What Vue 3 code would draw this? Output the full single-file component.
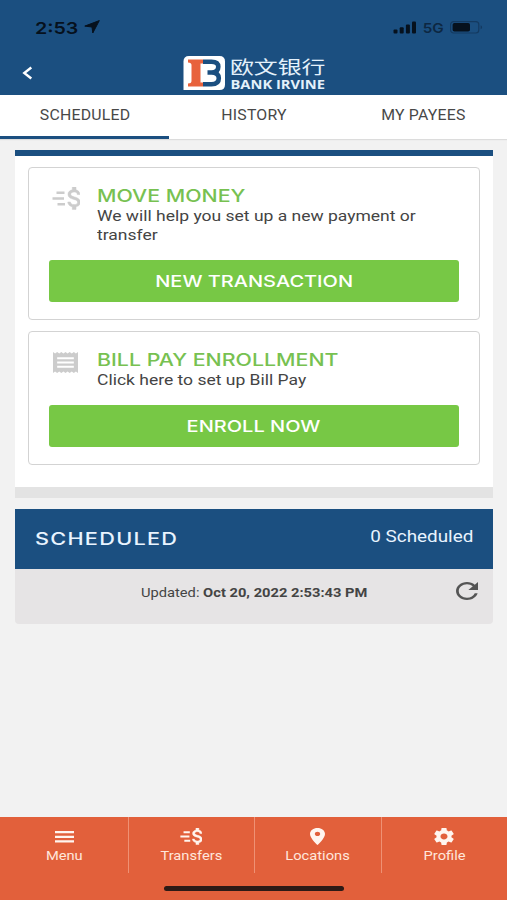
<template>
  <div class="screen">
    <header class="app-header">
      <div class="status-bar">
        <div class="status-left">
          <span class="clock">2:53</span>
          <svg class="nav-arrow" viewBox="0 0 16 14" preserveAspectRatio="none">
            <path d="M15.3 0.6 8.8 13 8 7 0.8 6.1z" />
          </svg>
        </div>
        <div class="status-right">
          <svg class="signal" viewBox="0 0 24 13">
            <rect x="0.5" y="8.5" width="4" height="4" rx="1" />
            <rect x="6.7" y="6.2" width="4" height="6.3" rx="1" />
            <rect x="12.9" y="3.5" width="4" height="9" rx="1" />
            <rect x="19" y="0.5" width="4" height="12" rx="1" />
          </svg>
          <span class="network">5G</span>
          <svg class="battery" viewBox="0 0 33 13">
            <rect class="battery-case" x="0.6" y="0.6" width="28.2" height="11.4" rx="3" />
            <rect x="2.6" y="2" width="17.4" height="8.6" rx="1.8" />
            <path class="battery-tip" d="M30.6 4.3c2 .8 2 3.2 0 4z" />
          </svg>
        </div>
      </div>

      <div class="brand-bar">
        <button class="back" aria-label="Back">
          <svg viewBox="0 0 11 14"><path d="M9.3 1.5 2.3 7l7 5.5" /></svg>
        </button>
        <svg class="logo" viewBox="0 0 144 36">
          <path class="logo-plate" d="M0.5 35V6.5Q0.5 1 6 1H36.5Q42 1 42 6.5V29.5Q42 35 36.5 35Z" />
          <!-- emblem: orange pillar and two blue arcs -->
          <path class="orange" d="M5 4.5H20V8.5H17.5V27.5H20V31.5H5V28.5Q8.5 28.5 8.5 26V10Q8.500 7.5 5 7.500Z" />
          <path class="arcs" d="M20 6.8H28.5Q35.3 6.8 35.3 11.8Q35.3 17.5 28.5 17.5H24.5M28.5 17.5Q35.8 17.5 35.8 23.3Q35.8 29.2 28.5 29.2H20" />
          <text class="brand-cn" x="47" y="18.8" textLength="95.5" lengthAdjust="spacingAndGlyphs">欧文银行</text>
          <text class="brand-en" x="47.5" y="34.2" textLength="94.5" lengthAdjust="spacingAndGlyphs">BANK IRVINE</text>
        </svg>
      </div>
    </header>

    <nav class="tabs">
      <button
        v-for="tab in tabs"
        :key="tab"
        :class="['tab', { active: tab === activeTab }]"
        @click="activeTab = tab"
      >
        <span>{{ tab }}</span>
      </button>
    </nav>

    <main class="content">
      <section class="actions">
        <article v-for="item in actions" :key="item.title" class="action">
          <div class="action-head">
            <div class="action-icon">
              <svg v-if="item.icon === 'money'" class="icon-money" viewBox="0 0 28 23" preserveAspectRatio="none">
                <path :d="moneyPath" transform="translate(7.9 -3.6) scale(1.24)" />
                <path class="dash" d="M4.5 5.8h8M0.5 11.5h11.5M5.5 17.2h7.5" />
              </svg>
              <svg v-else class="icon-receipt" viewBox="3 2 18 20" preserveAspectRatio="none">
                <path :d="receiptPath" />
              </svg>
            </div>
            <div class="action-text">
              <h2><span>{{ item.title }}</span></h2>
              <p><span v-for="line in item.lines" :key="line">{{ line }}</span></p>
            </div>
          </div>
          <button class="action-button"><span>{{ item.button }}</span></button>
        </article>
      </section>

      <section class="scheduled">
        <div class="scheduled-head">
          <h3>SCHEDULED</h3>
          <span class="count">0 Scheduled</span>
        </div>
        <div class="scheduled-info">
          <span class="updated">Updated: <b>Oct 20, 2022 2:53:43 PM</b></span>
          <button class="refresh" aria-label="Refresh">
            <svg viewBox="4 4 16 16" preserveAspectRatio="none"><path :d="refreshPath" /></svg>
          </button>
        </div>
      </section>
    </main>

    <footer class="bottom-bar">
      <div class="bottom-nav">
        <a v-for="link in links" :key="link.label" class="bottom-link">
          <svg :class="link.icon" :viewBox="link.viewBox" preserveAspectRatio="none">
            <template v-if="link.icon === 'transfers'">
              <path :d="moneyPath" transform="translate(7.9 -3.6) scale(1.24)" />
              <path class="dash" d="M4.5 5.8h8M0.5 11.5h11.5M5.5 17.2h7.5" />
            </template>
            <path v-else :d="link.path" />
          </svg>
          <span>{{ link.label }}</span>
        </a>
      </div>
      <div class="home-indicator"></div>
    </footer>
  </div>
</template>

<script setup>
import { ref } from "vue";

const tabs = ["SCHEDULED", "HISTORY", "MY PAYEES"];
const activeTab = ref("SCHEDULED");

const actions = [
  {
    icon: "money",
    title: "MOVE MONEY",
    lines: ["We will help you set up a new payment or", "transfer"],
    button: "NEW TRANSACTION",
  },
  {
    icon: "receipt",
    title: "BILL PAY ENROLLMENT",
    lines: ["Click here to set up Bill Pay"],
    button: "ENROLL NOW",
  },
];

const moneyPath =
  "M11.8 10.9c-2.27-.59-3-1.2-3-2.15 0-1.09 1.01-1.85 2.7-1.85 1.78 0 2.44.85 2.5 2.1h2.21c-.07-1.72-1.12-3.3-3.21-3.81V3h-3v2.16c-1.94.42-3.5 1.68-3.5 3.61 0 2.31 1.91 3.46 4.7 4.13 2.5.6 3 1.48 3 2.41 0 .69-.49 1.79-2.7 1.79-2.06 0-2.87-.92-2.98-2.1h-2.2c.12 2.19 1.76 3.42 3.68 3.83V21h3v-2.15c1.95-.37 3.5-1.5 3.5-3.55 0-2.84-2.43-3.81-4.7-4.4z";
const receiptPath =
  "M18 17H6v-2h12v2zm0-4H6v-2h12v2zm0-4H6V7h12v2zM3 22l1.5-1.5L6 22l1.5-1.5L9 22l1.5-1.5L12 22l1.5-1.5L15 22l1.5-1.5L18 22l1.5-1.5L21 22V2l-1.5 1.5L18 2l-1.5 1.5L15 2l-1.5 1.5L12 2l-1.5 1.5L9 2 7.5 3.5 6 2 4.5 3.5 3 2v20z";
const refreshPath =
  "M17.65 6.35C16.2 4.9 14.21 4 12 4c-4.42 0-7.99 3.58-7.99 8s3.57 8 7.99 8c3.73 0 6.84-2.55 7.73-6h-2.08c-.82 2.33-3.04 4-5.65 4-3.31 0-6-2.69-6-6s2.69-6 6-6c1.66 0 3.14.69 4.22 1.78L13 11h7V4l-2.35 2.35z";

const links = [
  { label: "Menu", icon: "menu", viewBox: "0 0 19 12", path: "M0 0h19v2.2H0zM0 4.7h19v2.2H0zM0 9.3h19v2.2H0z" },
  { label: "Transfers", icon: "transfers", viewBox: "0 0 28 23" },
  {
    label: "Locations",
    icon: "pin",
    viewBox: "5 2 14 20",
    path: "M12 2C8.13 2 5 5.13 5 9c0 5.25 7 13 7 13s7-7.75 7-13c0-3.87-3.13-7-7-7zm0 9.5c-1.38 0-2.5-1.12-2.5-2.5s1.12-2.5 2.5-2.5 2.5 1.12 2.5 2.5-1.12 2.5-2.5 2.5z",
  },
  {
    label: "Profile",
    icon: "gear",
    viewBox: "2 2 20 20",
    path: "M19.43 12.98c.04-.32.07-.64.07-.98s-.03-.66-.07-.98l2.11-1.65c.19-.15.24-.42.12-.64l-2-3.46c-.12-.22-.39-.3-.61-.22l-2.49 1c-.52-.4-1.08-.73-1.69-.98l-.38-2.65C14.46 2.18 14.25 2 14 2h-4c-.25 0-.46.18-.49.42l-.38 2.65c-.61.25-1.17.59-1.69.98l-2.49-1c-.23-.09-.49 0-.61.22l-2 3.46c-.13.22-.07.49.12.64l2.11 1.65c-.04.32-.07.65-.07.98s.03.66.07.98l-2.11 1.65c-.19.15-.24.42-.12.64l2 3.46c.12.22.39.3.61.22l2.49-1c.52.4 1.08.73 1.69.98l.38 2.65c.03.24.24.42.49.42h4c.25 0 .46-.18.49-.42l.38-2.65c.61-.25 1.17-.59 1.69-.98l2.49 1c.23.09.49 0 .61-.22l2-3.46c.12-.22.07-.49-.12-.64l-2.11-1.65zM12 15.5c-1.93 0-3.5-1.57-3.5-3.5s1.57-3.5 3.5-3.5 3.5 1.57 3.5 3.5-1.57 3.5-3.5 3.5z",
  },
];
</script>

<style>
body {
  background: #f2f2f2;
}
</style>

<style scoped>
.screen {
  display: flex;
  flex-direction: column;
  width: 507px;
  height: 900px;
  background: #f2f2f2;
  font-family: Roboto, "Liberation Sans", sans-serif;
  color: #444;
  overflow: hidden;
}

button {
  border: none;
  padding: 0;
  background: none;
  font-family: inherit;
  color: inherit;
  cursor: pointer;
}

h2,
h3,
p {
  margin: 0;
}

svg {
  display: block;
}

/* header */
.app-header {
  flex: none;
  height: 95px;
  background: #1b4f80;
}

.status-bar {
  display: flex;
  justify-content: space-between;
  align-items: center;
  height: 54px;
  padding: 0 24px 0 35px;
  box-sizing: border-box;
  color: #06111d;
  fill: #06111d;
}

.status-left,
.status-right {
  display: flex;
  align-items: center;
}

.clock {
  width: 49px;
  padding-top: 1px;
  font: 600 16.5px/20px Inter, sans-serif;
  transform: scaleX(1.19);
  transform-origin: left;
}

.nav-arrow {
  width: 16px;
  height: 14px;
  stroke: #06111d;
  stroke-width: 1;
  stroke-linejoin: round;
}

.signal {
  width: 24px;
  height: 13px;
}

.network {
  width: 28px;
  padding: 1px 0 0 5px;
  font: 600 13.5px/16px Inter, sans-serif;
  color: #0d2742;
  transform: scaleX(1.13);
  transform-origin: left;
}

.battery {
  width: 33px;
  height: 13px;
}

.battery-case {
  fill: none;
  stroke: #143a60;
  stroke-width: 1.2;
}

.battery-tip {
  fill: #143a60;
}

.brand-bar {
  display: flex;
  align-items: center;
  height: 36px;
  margin-top: 1px;
  padding-left: 22px;
}

.back svg {
  width: 11px;
  height: 14px;
  fill: none;
  stroke: #fff;
  stroke-width: 2.4;
}

.logo {
  width: 144px;
  height: 36px;
  margin-left: 150px;
  overflow: visible;
}

.logo-plate {
  fill: #fff;
}

.orange {
  fill: #e8623c;
}

.arcs {
  fill: none;
  stroke: #1b4f80;
  stroke-width: 4.6;
}

.brand-cn {
  font: 400 18px "Noto Sans CJK SC", sans-serif;
  fill: #e4f1fb;
}

.brand-en {
  font: bold 12px "Open Sans", sans-serif;
  fill: #e4f1fb;
}

/* tabs */
.tabs {
  flex: none;
  display: flex;
  height: 44px;
  background: #fff;
  box-shadow: 0 1px 1px #dcdcdc;
}

.tab {
  flex: 1;
  height: 44px;
  padding: 0 0 1px 1px;
  border-bottom: 3px solid transparent;
  font-size: 14px;
  color: #484848;
}

.tab.active {
  border-bottom-color: #1b4f80;
}

.tab span {
  display: inline-block;
  letter-spacing: 0.2px;
  transform: scaleX(1.13);
}

/* action cards */
.content {
  flex: 1;
  padding: 11px 14px 0 14.5px;
}

.actions {
  padding: 11px 13px 22px;
  background: #fff;
  border-top: 6px solid #1b4f80;
  border-bottom: 11px solid #e3e3e3;
}

.action {
  box-sizing: border-box;
  padding: 18px 20.5px 17px;
  border: 1.5px solid #d3d3d3;
  border-radius: 4px;
}

.action + .action {
  margin-top: 11px;
}

.action-head {
  display: flex;
}

.action-icon {
  width: 48px;
  fill: #ccc;
}

.dash {
  fill: none;
  stroke: #ccc;
  stroke-width: 2.4;
}

.icon-money {
  width: 28px;
  height: 23px;
  margin: 1px 0 0 3px;
  stroke: #ccc;
  stroke-width: 0.4;
}

.icon-receipt {
  width: 25px;
  height: 21px;
  margin: 2px 0 0 4px;
}

.action-text {
  flex: 1;
}

h2 {
  height: 21px;
  font: 500 17px/20px Inter, sans-serif;
  color: #77c151;
  white-space: nowrap;
}

h2 span,
p span {
  display: inline-block;
  transform-origin: left;
}

h2 span {
  transform: scaleX(1.255);
}

p span {
  transform: scaleX(1.166);
}

p {
  display: flex;
  flex-direction: column;
  align-items: flex-start;
  font-size: 15px;
  line-height: 19px;
  white-space: nowrap;
}

.action-button {
  display: block;
  width: 100%;
  height: 42px;
  margin-top: 15px;
  border-radius: 3px;
  background: #77c845;
  color: #fff;
  font: 500 16px/42px Inter, sans-serif;
}

.action-button span {
  display: inline-block;
  transform: scaleX(1.25);
}

/* scheduled payments */
.scheduled {
  margin-top: 11px;
}

.scheduled-head {
  display: flex;
  justify-content: space-between;
  height: 60px;
  padding: 0 20px;
  background: #1b4f80;
  color: #e9f4ff;
}

h3 {
  font: 500 17px/60px Inter, sans-serif;
  letter-spacing: 1px;
  transform: scaleX(1.275);
  transform-origin: left;
}

.count {
  font-size: 16px;
  line-height: 55px;
  transform: scaleX(1.18);
  transform-origin: right;
}

.scheduled-info {
  display: grid;
  grid-template-columns: 1fr auto 1fr;
  height: 55px;
  padding: 0 15px;
  background: #e6e4e5;
  border-radius: 0 0 4px 4px;
}

.updated {
  grid-column: 2;
  font-size: 13px;
  line-height: 47px;
  transform: scaleX(1.13);
  white-space: nowrap;
}

.refresh {
  justify-self: end;
  height: 18px;
  margin-top: 13px;
}

.refresh svg {
  width: 22px;
  height: 18px;
  fill: #555;
}

/* bottom navigation */
.bottom-bar {
  flex: none;
  height: 83px;
  background: #e2603b;
}

.bottom-nav {
  display: grid;
  grid-template-columns: repeat(4, 1fr);
  height: 56px;
  margin-bottom: 13px;
  padding-left: 1px;
}

.bottom-link {
  display: flex;
  flex-direction: column;
  align-items: center;
  justify-content: flex-end;
  box-sizing: border-box;
  padding-bottom: 9px;
  border-left: 1px solid #ef9174;
  font-size: 13px;
  line-height: 16px;
  color: #ffe6dc;
  fill: #fff5ef;
}

.bottom-link:first-child {
  border-left-color: transparent;
}

.bottom-link span {
  margin-top: 3.5px;
  transform: scaleX(1.13);
}

.bottom-link .dash {
  stroke: #fff5ef;
  stroke-width: 2.8;
}

.menu {
  width: 19px;
  height: 12px;
  margin-bottom: 2px;
}

.transfers {
  width: 22px;
  height: 17px;
  stroke: #fff5ef;
  stroke-width: 0.5;
}

.pin {
  width: 15px;
  height: 17px;
}

.gear {
  width: 20px;
  height: 17px;
}

.home-indicator {
  width: 180px;
  height: 5px;
  margin: 0 auto;
  border-radius: 3px;
  background: #2d1a16;
}
</style>
